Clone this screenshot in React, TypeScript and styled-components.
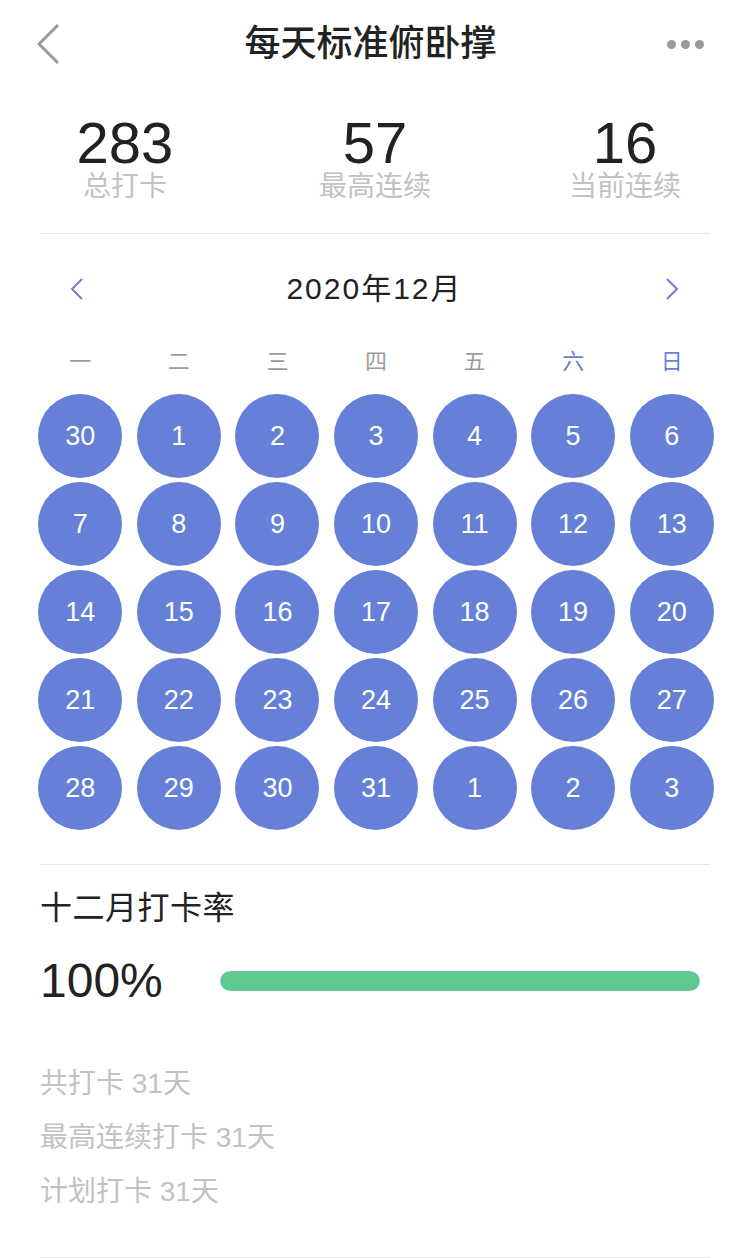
import React from "react";
import styled, { createGlobalStyle } from "styled-components";

const Global = createGlobalStyle`
  html, body { margin: 0; padding: 0; background: #fff; }
  body { font-family: "Liberation Sans", "Noto Sans CJK SC", sans-serif; }
`;

const Page = styled.div`
  width: 750px;
  background: #fff;
  display: flex;
  flex-direction: column;
`;

const Header = styled.header`
  height: 88px;
  display: grid;
  grid-template-columns: 1fr auto 1fr;
  align-items: center;
  padding: 0 46px 0 37px;
`;

const BackBtn = styled.div`
  display: flex;
  align-items: center;
  justify-self: start;
`;

const Title = styled.h1`
  margin: 0;
  font-size: 36px;
  font-weight: 500;
  color: #222;
  line-height: 44px;
`;

const MoreBtn = styled.div`
  justify-self: end;
  display: flex;
  gap: 5px;
`;

const Dot = styled.span`
  width: 9px;
  height: 9px;
  border-radius: 50%;
  background: #9a9a9a;
`;

const Stats = styled.section`
  display: grid;
  grid-template-columns: repeat(3, 1fr);
  padding: 26px 0 31px;
`;

const Stat = styled.div`
  display: flex;
  flex-direction: column;
  align-items: center;
`;

const StatNum = styled.div`
  font-size: 58px;
  line-height: 58px;
  color: #222;
`;

const StatLabel = styled.div`
  font-size: 28px;
  line-height: 30px;
  color: #c2c2c2;
`;

const Divider = styled.hr<{ $mt?: number }>`
  margin: ${(p) => p.$mt ?? 0}px 40px 0;
  border: none;
  height: 1px;
  background: #e6e6e6;
`;

const MonthBar = styled.div`
  margin-top: 35px;
  height: 40px;
  display: grid;
  grid-template-columns: 1fr auto 1fr;
  align-items: center;
  padding: 0 71px 0 70px;
`;

const MonthTitle = styled.div`
  font-size: 30px;
  line-height: 40px;
  color: #222;
  letter-spacing: 2px;
`;

const Arrow = styled.div<{ $end?: boolean }>`
  display: flex;
  justify-self: ${(p) => (p.$end ? "end" : "start")};
`;

const WeekRow = styled.div`
  margin: 38px 29px 0 31px;
  display: grid;
  grid-template-columns: repeat(7, 1fr);
`;

const WeekDay = styled.div<{ $accent?: boolean }>`
  text-align: center;
  font-size: 22px;
  line-height: 30px;
  color: ${(p) => (p.$accent ? "#6a7fd0" : "#9c9c9c")};
`;

const DayGrid = styled.div`
  margin: 17px 29px 0 31px;
  display: grid;
  grid-template-columns: repeat(7, 1fr);
  row-gap: 4px;
`;

const DayCell = styled.div`
  display: flex;
  justify-content: center;
`;

const DayCircle = styled.div`
  width: 84px;
  height: 84px;
  border-radius: 50%;
  background: #6680d8;
  color: #fff;
  font-size: 27px;
  display: flex;
  align-items: center;
  justify-content: center;
`;

const RateTitle = styled.div`
  margin: 23px 40px 0;
  font-size: 32px;
  line-height: 40px;
  color: #222;
  letter-spacing: 0.5px;
`;

const RateRow = styled.div`
  margin: 28px 50px 0 40px;
  height: 50px;
  display: flex;
  align-items: center;
`;

const RateValue = styled.div`
  width: 180px;
  font-size: 48px;
  line-height: 50px;
  color: #222;
`;

const Track = styled.div`
  flex: 1;
  height: 20px;
  border-radius: 10px;
  background: #eee;
  overflow: hidden;
`;

const Fill = styled.div`
  height: 100%;
  border-radius: 10px;
  background: #5ec991;
`;

const Summary = styled.div`
  margin: 51px 40px 0;
  display: flex;
  flex-direction: column;
`;

const SummaryLine = styled.div`
  font-size: 28px;
  line-height: 54px;
  color: #c2c2c2;
`;

const weekdays = ["一", "二", "三", "四", "五", "六", "日"];
const days = [
  30, 1, 2, 3, 4, 5, 6,
  7, 8, 9, 10, 11, 12, 13,
  14, 15, 16, 17, 18, 19, 20,
  21, 22, 23, 24, 25, 26, 27,
  28, 29, 30, 31, 1, 2, 3,
];

export default function App() {
  const rate = 100;
  return (
    <Page>
      <Global />
      <Header>
        <BackBtn>
          <svg width="24" height="42" viewBox="0 0 24 42">
            <polyline points="21,2 2,21 21,40" fill="none" stroke="#999" strokeWidth="3" />
          </svg>
        </BackBtn>
        <Title>每天标准俯卧撑</Title>
        <MoreBtn>
          <Dot />
          <Dot />
          <Dot />
        </MoreBtn>
      </Header>

      <Stats>
        <Stat>
          <StatNum>283</StatNum>
          <StatLabel>总打卡</StatLabel>
        </Stat>
        <Stat>
          <StatNum>57</StatNum>
          <StatLabel>最高连续</StatLabel>
        </Stat>
        <Stat>
          <StatNum>16</StatNum>
          <StatLabel>当前连续</StatLabel>
        </Stat>
      </Stats>

      <Divider />

      <MonthBar>
        <Arrow>
          <svg width="14" height="24" viewBox="0 0 14 24">
            <polyline points="12,2 2,12 12,22" fill="none" stroke="#6a7fd0" strokeWidth="2" />
          </svg>
        </Arrow>
        <MonthTitle>2020年12月</MonthTitle>
        <Arrow $end>
          <svg width="14" height="24" viewBox="0 0 14 24">
            <polyline points="2,2 12,12 2,22" fill="none" stroke="#6a7fd0" strokeWidth="2" />
          </svg>
        </Arrow>
      </MonthBar>

      <WeekRow>
        {weekdays.map((w, i) => (
          <WeekDay key={w} $accent={i >= 5}>
            {w}
          </WeekDay>
        ))}
      </WeekRow>

      <DayGrid>
        {days.map((d, i) => (
          <DayCell key={i}>
            <DayCircle>{d}</DayCircle>
          </DayCell>
        ))}
      </DayGrid>

      <Divider $mt={34} />

      <RateTitle>十二月打卡率</RateTitle>
      <RateRow>
        <RateValue>{rate}%</RateValue>
        <Track>
          <Fill style={{ width: `${rate}%` }} />
        </Track>
      </RateRow>

      <Summary>
        <SummaryLine>共打卡 31天</SummaryLine>
        <SummaryLine>最高连续打卡 31天</SummaryLine>
        <SummaryLine>计划打卡 31天</SummaryLine>
      </Summary>

      <Divider $mt={38} />
    </Page>
  );
}
